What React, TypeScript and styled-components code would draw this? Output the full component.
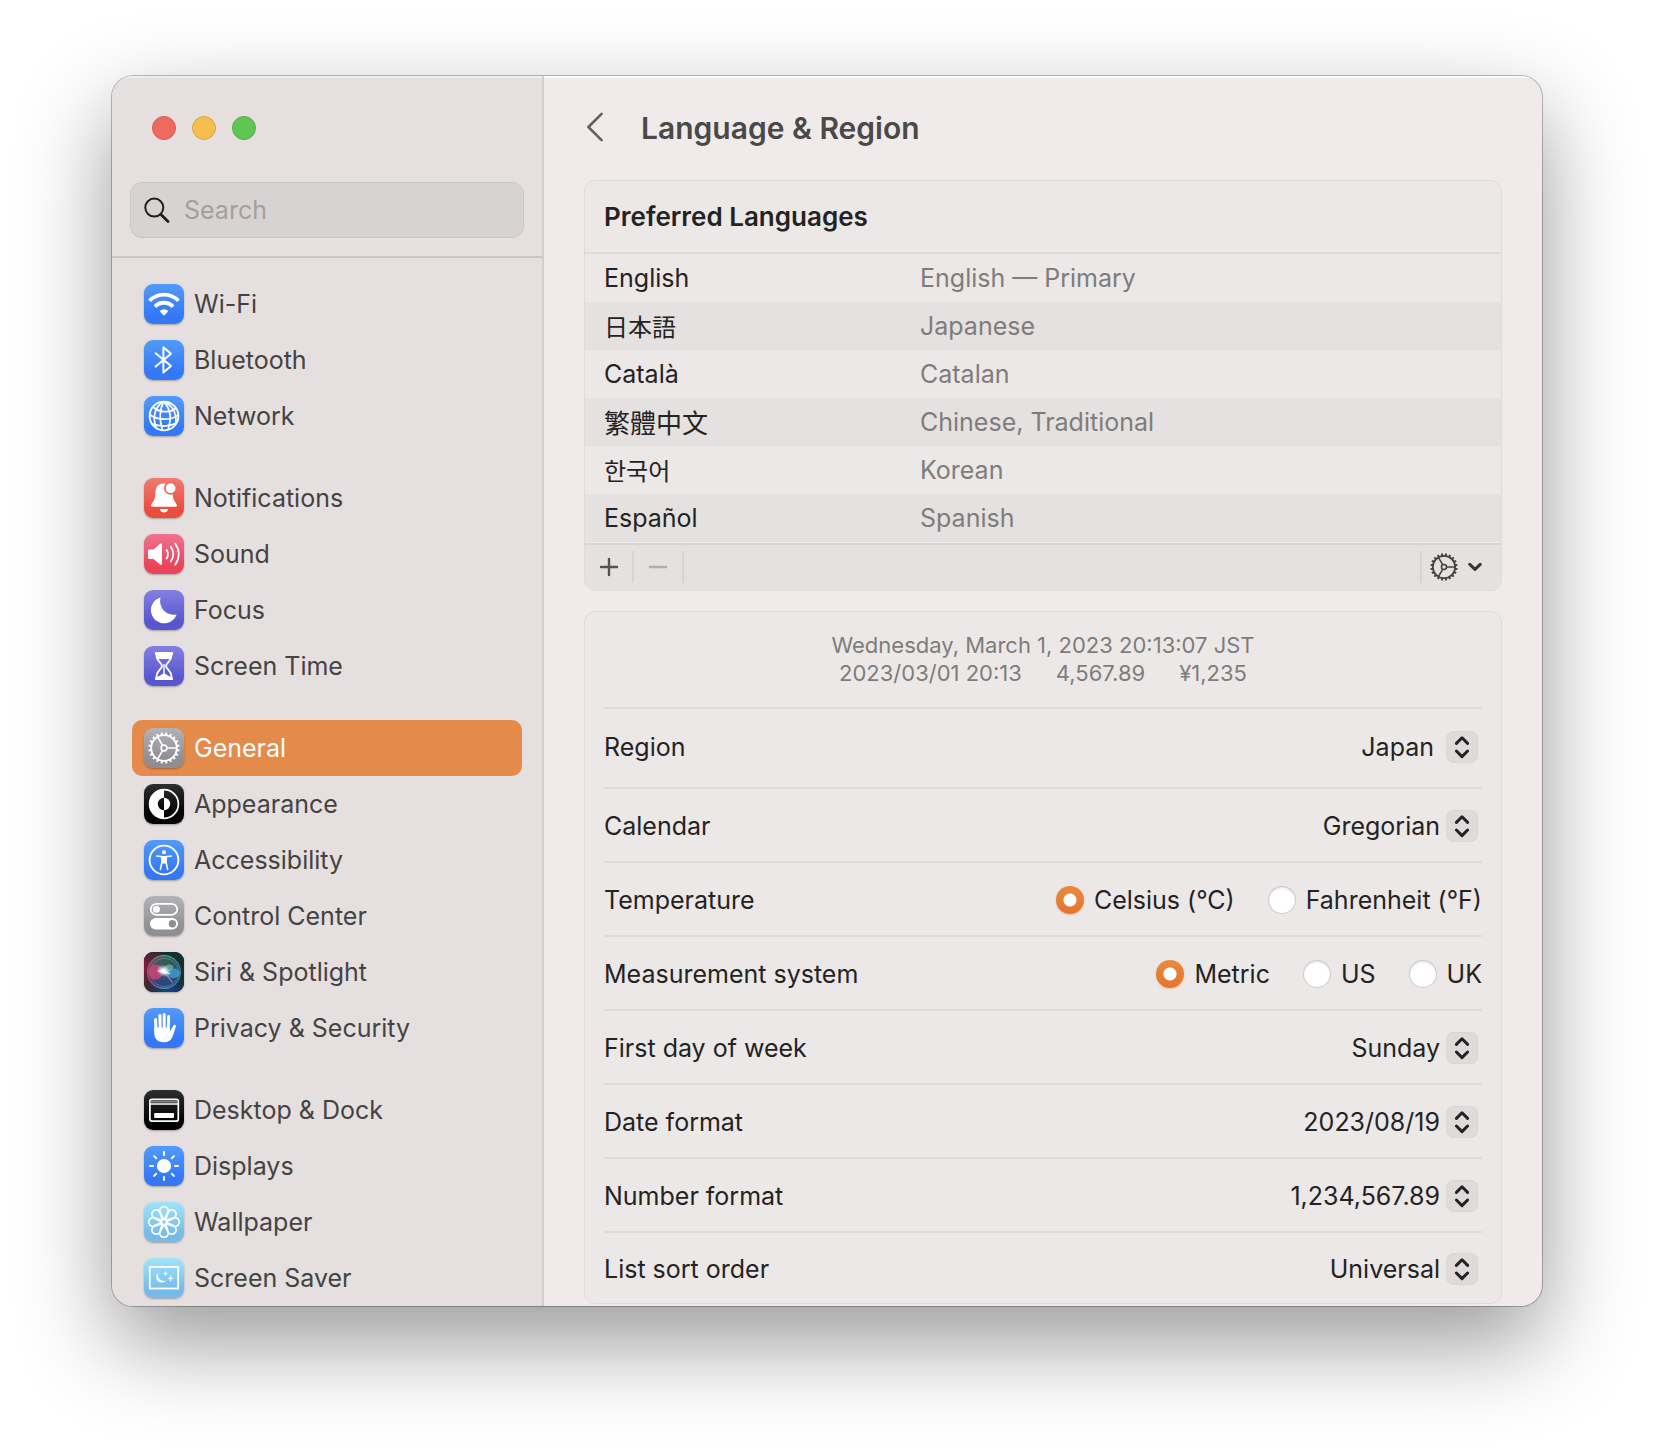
import React, { useState } from "react";
import styled, { createGlobalStyle, css } from "styled-components";

const GlobalStyle = createGlobalStyle`
  *, *::before, *::after { box-sizing: border-box; }
  body {
    margin: 0;
    background: #ffffff;
    font-family: Inter, "Noto Sans CJK JP", sans-serif;
    font-size: 25px;
    line-height: 32px;
    color: #242323;
  }
  button, input, select { font: inherit; color: inherit; }
`;

/* ---------- window ---------- */

const Desktop = styled.div`
  padding: 76px 112px 148px;
`;

const Window = styled.div`
  display: flex;
  border-radius: 21px;
  overflow: hidden;
  background: #f0ebea;
  box-shadow:
    0 0 0 1px rgba(0, 0, 0, 0.25),
    0 36px 92px rgba(0, 0, 0, 0.41);
`;

const Sidebar = styled.aside`
  flex: 0 0 432px;
  min-width: 0;
  background: #e5dfdf;
  border-right: 2px solid #d3cdcc;
  box-shadow: inset 0 2px 0 #f0ecec;
`;

const SidebarTop = styled.div`
  padding: 40px 18px 18px;
  border-bottom: 2px solid #cbc5c5;
`;

const TrafficLights = styled.div`
  display: flex;
  gap: 16px;
  padding-left: 22px;
  margin-bottom: 42px;
`;

const Light = styled.button<{ $fill: string; $edge: string }>`
  width: 24px;
  height: 24px;
  padding: 0;
  border-radius: 50%;
  border: 1px solid ${(p) => p.$edge};
  background: ${(p) => p.$fill};
`;

const SearchBox = styled.label`
  display: flex;
  align-items: center;
  gap: 14px;
  height: 56px;
  padding: 0 13px;
  border: 1px solid #cac6c5;
  border-radius: 12px;
  background: #d7d3d2;
  svg { flex: none; }
`;

const SearchInput = styled.input`
  flex: 1;
  width: 100%;
  min-width: 0;
  padding: 0;
  border: 0;
  outline: 0;
  background: transparent;
  &::placeholder {
    color: #a39f9e;
    opacity: 1;
  }
`;

const Nav = styled.nav`
  display: flex;
  flex-direction: column;
  gap: 26px;
  padding: 18px 20px 0;
`;

const NavGroup = styled.div`
  display: flex;
  flex-direction: column;
`;

const NavLink = styled.a<{ $active: boolean }>`
  display: flex;
  align-items: center;
  gap: 10px;
  height: 56px;
  padding: 0 12px;
  border-radius: 10px;
  text-decoration: none;
  color: ${(p) => (p.$active ? "#ffffff" : "#454342")};
  background: ${(p) => (p.$active ? "#e48a4a" : "transparent")};
`;

const Tile = styled.span<{ $from: string; $to: string }>`
  flex: none;
  display: block;
  width: 40px;
  height: 40px;
  border-radius: 9px;
  overflow: hidden;
  background: linear-gradient(${(p) => p.$from}, ${(p) => p.$to} 80%);
  box-shadow: 0 1px 2px rgba(0, 0, 0, 0.3);
  svg { display: block; }
`;

/* ---------- main pane ---------- */

const Main = styled.main`
  flex: 1;
  min-width: 0;
  padding: 0 40px 2px;
  box-shadow: inset 0 2px 0 #faf8f8;
`;

const TitleBar = styled.header`
  display: flex;
  align-items: center;
  gap: 37px;
  height: 104px;
`;

const BackButton = styled.button`
  display: flex;
  padding: 0;
  border: 0;
  background: transparent;
  color: #636060;
`;

const Title = styled.h1`
  margin: 0;
  font-size: 30px;
  line-height: 36px;
  font-weight: 600;
  color: #4a4848;
`;

const Card = styled.section`
  border: 1px solid #dfdbda;
  border-radius: 11px;
  overflow: hidden;
  background: #ece8e7;
  & + & { margin-top: 20px; }
`;

const CardTitle = styled.h2`
  display: flex;
  align-items: center;
  margin: 0;
  height: 73px;
  padding: 0 19px;
  border-bottom: 2px solid #dfdbda;
  font-size: 26px;
  font-weight: 600;
`;

const LanguageTable = styled.table`
  width: 100%;
  table-layout: fixed;
  border-collapse: collapse;
`;

const LanguageRow = styled.tr`
  height: 48px;
  &:nth-child(even) { background: #e5e1e0; }
`;

const LanguageName = styled.th<{ $font?: string; $size?: number }>`
  width: 335px;
  padding: 0 0 0 19px;
  text-align: left;
  font-weight: 400;
  ${(p) => p.$font && css`font-family: ${p.$font};`}
  ${(p) => p.$size && css`font-size: ${p.$size}px;`}
`;

const LanguageDetail = styled.td`
  padding: 0;
  color: #7f7c7b;
`;

const CardFooter = styled.div`
  display: flex;
  align-items: center;
  height: 48px;
  border-top: 1px solid #efebea;
  box-shadow: inset 0 2px 0 #d8d4d3;
  background: #e5e1e0;
`;

const ToolButton = styled.button<{ $edge: "left" | "right"; $width: number }>`
  display: flex;
  align-items: center;
  justify-content: center;
  width: ${(p) => p.$width}px;
  height: 32px;
  padding: 0;
  border: 0 solid #d8d4d3;
  border-${(p) => p.$edge}-width: 2px;
  background: transparent;
  color: #555252;
  &:disabled { color: #b2aead; }
`;

const MenuButton = styled(ToolButton)`
  justify-content: flex-start;
  gap: 10px;
  padding-left: 8px;
`;

const Spacer = styled.span`
  flex: 1;
`;

const Preview = styled.div`
  padding: 19px 0 20px;
  text-align: center;
  font-size: 22px;
  line-height: 28px;
  color: #7f7c7b;
`;

const PreviewLine = styled.div`
  display: flex;
  justify-content: center;
  gap: 34px;
`;

const Settings = styled.div`
  padding: 0 19px;
`;

const Row = styled.div<{ $tall?: boolean }>`
  display: flex;
  align-items: center;
  justify-content: space-between;
  height: ${(p) => (p.$tall ? 80 : 74)}px;
  padding: ${(p) => (p.$tall ? "0 0 2px" : "2px 0 0")};
  border-top: 2px solid #dfdbda;
  &:last-child { height: 72px; }
`;

const Picker = styled.span`
  display: grid;
  align-items: center;
  padding-right: 4px;
  & > * { grid-area: 1 / 1; }
`;

const Select = styled.select<{ $gap: number }>`
  appearance: none;
  width: 320px;
  height: 40px;
  padding: 0 ${(p) => p.$gap + 32}px 0 0;
  border: 0;
  background: transparent;
  text-align: right;
  text-align-last: right;
`;

const Stepper = styled.span`
  justify-self: end;
  width: 32px;
  height: 32px;
  border-radius: 8px;
  background: #dfdbda;
  box-shadow: inset 0 0 0 1px #dad6d5;
  pointer-events: none;
  svg { display: block; }
`;

const RadioSet = styled.fieldset`
  display: flex;
  gap: 33px;
  margin: 0;
  padding: 0;
  border: 0;
`;

const RadioLabel = styled.label`
  display: flex;
  align-items: center;
  gap: 10px;
`;

const Radio = styled.input`
  appearance: none;
  width: 28px;
  height: 28px;
  margin: 0;
  border-radius: 50%;
  background: #ffffff;
  box-shadow: inset 0 0 0 1px #cfcbca, inset 0 2px 3px rgba(0, 0, 0, 0.12);
  &:checked {
    background: radial-gradient(circle, #ffffff 0 6px, transparent 7px),
      linear-gradient(#e98b41, #e4732c);
    box-shadow: 0 1px 2px rgba(228, 115, 44, 0.35);
  }
`;

/* ---------- drawings ---------- */

const turn = (n: number, i: number) => `rotate(${(360 / n) * i} 20 20)`;

function GearShape({ width }: { width: number }) {
  return (
    <g fill="none" stroke="currentColor" strokeWidth={width}>
      <circle cx="20" cy="20" r="12.8" strokeWidth={width * 1.15} />
      <circle cx="20" cy="20" r="2.9" />
      {[0, 1, 2].map((i) => (
        <path key={i} d="M23 20H32.5" transform={turn(3, i)} />
      ))}
      {Array.from({ length: 20 }, (_, i) => (
        <path key={i} d="M32.8 20H35.6" transform={turn(20, i + 0.5)} strokeWidth={width * 1.25} />
      ))}
    </g>
  );
}

const glyphs: Record<string, React.ReactNode> = {
  wifi: (
    <g fill="none" stroke="#fff" strokeWidth="3.8">
      <path d="M5.6 16.8A20 20 0 0 1 34.4 16.8" />
      <path d="M11 22.6A12.5 12.5 0 0 1 29 22.6" />
      <path d="M15.6 27A6.2 6.2 0 0 1 24.4 27L20.8 31Q20 31.8 19.2 31Z" fill="#fff" stroke="none" />
    </g>
  ),
  bluetooth: (
    <path d="M11.6 13.3L27 26L19.4 32.6V7.2L27 13.8L11.6 26.6" fill="none" stroke="#fff" strokeWidth="2" strokeLinejoin="round" strokeLinecap="round" />
  ),
  network: (
    <g fill="none" stroke="#fff" strokeWidth="1.7">
      <circle cx="20" cy="20" r="14.4" strokeWidth="1.9" />
      <path d="M19.5 5.6C10.5 11 8 22 12.5 32" />
      <path d="M19.5 5.6C15.5 14 15.5 25 18.5 34.2" />
      <path d="M19.5 5.6C26 12 28 22 24 33.6" />
      <path d="M19.5 5.6C28 8.5 33 17 31.8 27.5" />
      <path d="M9 11C15 16.5 26 17.5 32 12" />
      <path d="M5.6 18.5C13 24.5 28 25 34.4 18.5" />
      <path d="M7.6 27.5C15.5 30.5 25 31 32.4 27" />
    </g>
  ),
  bell: (
    <>
      <path d="M7 27.4C7 25.4 11.4 23 11.4 15.5C11.4 9 14 5.4 19.5 5.4C25.5 5.4 28.6 9 28.6 15.5C28.6 23 33 25.4 33 27.4Q33 28.8 31.5 28.8H8.5Q7 28.8 7 27.4Z" fill="#fff" />
      <path d="M15.8 31H24.2C23.8 33.4 22 34.6 20 34.6S16.2 33.4 15.8 31Z" fill="#fff" />
      <circle cx="26.6" cy="10.2" r="6.6" fill="#ee6a5c" />
      <circle cx="26.6" cy="10.2" r="4.9" fill="#fff" />
    </>
  ),
  sound: (
    <>
      <path d="M5.4 15.4H9.6L16 9.8Q18 8.6 18 11V29.4Q18 32 16 30.6L9.6 25H5.4Q4 25 4 23.6V16.8Q4 15.4 5.4 15.4Z" fill="#fff" />
      <g fill="none" stroke="#fff" strokeWidth="1.8" strokeLinecap="round">
        <path d="M22.6 16Q25.4 20.2 22.6 24.4" />
        <path d="M26.8 12.8Q31.8 20.2 26.8 27.6" />
        <path d="M31.2 9.6Q38.4 20.2 31.2 30.8" />
      </g>
    </>
  ),
  moon: <path d="M16.6 7.4A13.2 13.2 0 1 0 32.6 24.4A13.6 13.6 0 0 1 16.6 7.4Z" fill="#fff" />,
  hourglass: (
    <>
      <g fill="none" stroke="#fff" strokeWidth="1.8" strokeLinejoin="round">
        <path d="M12.6 7V10C12.6 15 18 17 18 20S12.6 25 12.6 30V33H27.4V30C27.4 25 22 23 22 20S27.4 15 27.4 10V7Z" />
      </g>
      <path d="M11.6 6H28.4Q29 6 29 7V8.4Q29 9 28 9L27 13H13L12 9Q11 9 11 8.4V7Q11 6 11.6 6Z" fill="#fff" />
      <path d="M11.6 34H28.4Q29 34 29 33V31.8Q25 30.6 20 27Q15 30.6 11 31.8V33Q11 34 11.6 34Z" fill="#fff" />
      <path d="M20 18V28" stroke="#fff" strokeWidth="1.4" />
    </>
  ),
  gear: (
    <g color="#fff">
      <GearShape width={1.6} />
    </g>
  ),
  appearance: (
    <>
      <circle cx="20" cy="20" r="14.4" fill="none" stroke="#fff" strokeWidth="1.7" />
      <path d="M20 5.4A14.6 14.6 0 0 0 20 34.6V26.2A6.2 6.2 0 0 1 20 13.8Z" fill="#fff" />
      <path d="M20 13.8A6.2 6.2 0 0 1 20 26.2Z" fill="#fff" />
    </>
  ),
  accessibility: (
    <>
      <circle cx="20" cy="20" r="14.4" fill="none" stroke="#fff" strokeWidth="1.9" />
      <circle cx="20" cy="12.2" r="2" fill="#fff" />
      <path d="M12.8 16L18 16.8V22L16.4 29.4M27.2 16L22 16.8V22L23.6 29.4" fill="none" stroke="#fff" strokeWidth="1.6" strokeLinecap="round" />
      <path d="M16.5 15.9H23.5L22.8 18V23.5H17.2V18Z" fill="#fff" />
    </>
  ),
  toggles: (
    <>
      <rect x="6.8" y="7.8" width="26.4" height="11" rx="5.5" fill="none" stroke="#fff" strokeWidth="1.7" />
      <circle cx="12.4" cy="13.3" r="3.5" fill="#fff" />
      <rect x="6" y="22" width="28" height="11.4" rx="5.7" fill="#fff" />
      <circle cx="28.4" cy="27.7" r="3.7" fill="#8f8e93" />
    </>
  ),
  siri: (
    <>
      <defs>
        <radialGradient id="siriRed" cx="0" cy="0.4" r="0.7">
          <stop offset="0" stopColor="#8a1a3c" />
          <stop offset="1" stopColor="#8a1a3c" stopOpacity="0" />
        </radialGradient>
        <radialGradient id="siriBlue" cx="0.6" cy="1.05" r="0.55">
          <stop offset="0" stopColor="#1f3f96" />
          <stop offset="1" stopColor="#1f3f96" stopOpacity="0" />
        </radialGradient>
        <radialGradient id="siriGlow">
          <stop offset="0" stopColor="#ffffff" />
          <stop offset="0.3" stopColor="#ffffff" stopOpacity="0.85" />
          <stop offset="1" stopColor="#b9eef0" stopOpacity="0" />
        </radialGradient>
        <linearGradient id="siriRing" x1="0" x2="1">
          <stop offset="0" stopColor="#d9527e" />
          <stop offset="0.5" stopColor="#67b79a" />
          <stop offset="1" stopColor="#3f93c4" />
        </linearGradient>
        <linearGradient id="siriOrb" x1="0" x2="0" y1="0" y2="1">
          <stop offset="0" stopColor="#3f7f6b" />
          <stop offset="0.5" stopColor="#3f6f86" />
          <stop offset="1" stopColor="#24439c" />
        </linearGradient>
      </defs>
      <rect width="40" height="40" fill="#14302f" />
      <rect width="40" height="40" fill="url(#siriRed)" />
      <rect width="40" height="40" fill="url(#siriBlue)" />
      <circle cx="20" cy="20" r="16.4" fill="url(#siriOrb)" fillOpacity="0.6" stroke="url(#siriRing)" strokeOpacity="0.8" strokeWidth="1.1" />
      <circle cx="20.4" cy="20.4" r="14.2" fill="none" stroke="url(#siriRing)" strokeOpacity="0.7" strokeWidth="0.8" />
      <ellipse cx="11.6" cy="20" rx="7.2" ry="7.4" fill="#dc4279" fillOpacity="0.75" />
      <ellipse cx="29.4" cy="21.4" rx="6.6" ry="4.8" fill="#3fa2e0" fillOpacity="0.75" />
      <path d="M18 20C20 12 26 11 29 14C31 17 26 19 20 21Z" fill="#8fd0bb" fillOpacity="0.55" />
      <path d="M20 20L28.5 30.5" stroke="#e58ab4" strokeOpacity="0.65" strokeWidth="1.2" />
      <ellipse cx="19.6" cy="18.8" rx="7.4" ry="6" fill="url(#siriGlow)" transform="rotate(25 19.6 18.8)" />
      <path d="M13 19L20 17.4L27 22L19.4 21.4Z" fill="#ffffff" fillOpacity="0.75" />
    </>
  ),
  hand: (
    <>
      <g fill="none" stroke="#fff" strokeWidth="3" strokeLinecap="round">
        <path d="M11.6 11.6L12 23" />
        <path d="M15.9 7.4L16.2 21" />
        <path d="M20.2 6.4V21" />
        <path d="M24.6 8.6L24.2 22" />
      </g>
      <path d="M10.2 19.5H25.8V23.4C27.4 21.6 28.2 18.6 29.6 17.2C30.8 16.1 32.4 17 31.9 18.6L29 27.4C27.4 32 24.4 34.2 19.6 34.2C13.4 34.2 10.2 30.6 10.2 24.6Z" fill="#fff" />
    </>
  ),
  dock: (
    <>
      <rect x="5.9" y="9.3" width="28.4" height="21.8" rx="2" fill="none" stroke="#fff" strokeWidth="1.7" />
      <path d="M6 11.8H34" stroke="#8d8d8d" strokeWidth="1.4" />
      <path d="M6 14H34" stroke="#fff" strokeWidth="1.3" />
      <rect x="10.2" y="23" width="19.8" height="5" rx="0.8" fill="#fff" />
    </>
  ),
  sun: (
    <>
      <circle cx="20" cy="20" r="7.1" fill="#fff" />
      {Array.from({ length: 8 }, (_, i) => (
        <path key={i} d="M31 20H34" stroke="#fff" strokeWidth="2" strokeLinecap="round" transform={turn(8, i)} />
      ))}
    </>
  ),
  flower: (
    <g fill="none" stroke="#fff" strokeWidth="1.6">
      {Array.from({ length: 8 }, (_, i) => (
        <path key={i} d="M18.4 18.2L15.8 10.4C14.2 2.8 25.8 2.8 24.2 10.4L21.6 18.2" transform={turn(8, i)} />
      ))}
      <circle cx="20" cy="20" r="2.6" />
    </g>
  ),
  saver: (
    <>
      <rect x="5.8" y="8.9" width="28.4" height="21.6" fill="none" stroke="#fff" strokeWidth="1.8" />
      <path d="M14.4 14.6A5.5 5.5 0 1 0 22 22.4A5.9 5.9 0 0 1 14.4 14.6Z" fill="#fff" />
      <path d="M21.5 12.6L22.2 14.9L24.4 15.6L22.2 16.3L21.5 18.6L20.8 16.3L18.8 15.6L20.8 14.9Z" fill="#fff" />
      <path d="M26.6 16.6L27.4 19.4L30 20.3L27.4 21.2L26.6 24L25.8 21.2L23.4 20.3L25.8 19.4Z" fill="#fff" />
    </>
  ),
};

const tints = {
  blue: ["#529af8", "#3478f6"],
  red: ["#ee7b70", "#eb4d3d"],
  pink: ["#ee7390", "#eb445a"],
  violet: ["#8380e2", "#5856ce"],
  gray: ["#b3b2b6", "#8f8e93"],
  black: ["#2e2e2e", "#000000"],
  sky: ["#a2e3fa", "#74bbe9"],
} as const;

type Tint = keyof typeof tints;
type NavItem = [label: string, glyph: string, tint: Tint];

const groups: NavItem[][] = [
  [
    ["Wi-Fi", "wifi", "blue"],
    ["Bluetooth", "bluetooth", "blue"],
    ["Network", "network", "blue"],
  ],
  [
    ["Notifications", "bell", "red"],
    ["Sound", "sound", "pink"],
    ["Focus", "moon", "violet"],
    ["Screen Time", "hourglass", "violet"],
  ],
  [
    ["General", "gear", "gray"],
    ["Appearance", "appearance", "black"],
    ["Accessibility", "accessibility", "blue"],
    ["Control Center", "toggles", "gray"],
    ["Siri & Spotlight", "siri", "black"],
    ["Privacy & Security", "hand", "blue"],
  ],
  [
    ["Desktop & Dock", "dock", "black"],
    ["Displays", "sun", "blue"],
    ["Wallpaper", "flower", "sky"],
    ["Screen Saver", "saver", "sky"],
  ],
];

const languages = [
  { name: "English", detail: "English — Primary", lang: "en" },
  { name: "日本語", detail: "Japanese", lang: "ja", font: '"Noto Sans CJK JP", sans-serif', size: 24 },
  { name: "Català", detail: "Catalan", lang: "ca" },
  { name: "繁體中文", detail: "Chinese, Traditional", lang: "zh-Hant", font: '"Noto Sans CJK TC", sans-serif', size: 26 },
  { name: "한국어", detail: "Korean", lang: "ko", font: '"Noto Sans CJK KR", sans-serif', size: 24 },
  { name: "Español", detail: "Spanish", lang: "es" },
];

/* ---------- rows ---------- */

function SelectRow({ label, value, tall }: { label: string; value: string; tall?: boolean }) {
  const id = label.toLowerCase().replace(/ /g, "-");
  return (
    <Row $tall={tall}>
      <label htmlFor={id}>{label}</label>
      <Picker>
        <Select id={id} $gap={tall ? 12 : 6} defaultValue={value}>
          <option>{value}</option>
        </Select>
        <Stepper>
          <svg width="32" height="32" viewBox="0 0 32 32" fill="none" stroke="#242323" strokeWidth="3" strokeLinecap="round" strokeLinejoin="round" aria-hidden="true">
            <path d="M10.4 12.4L16 6.8L21.6 12.4M10.4 20L16 25.6L21.6 20" />
          </svg>
        </Stepper>
      </Picker>
    </Row>
  );
}

function RadioRow({ label, options }: { label: string; options: string[] }) {
  const [chosen, setChosen] = useState(options[0]);
  return (
    <Row>
      <span>{label}</span>
      <RadioSet aria-label={label}>
        {options.map((option) => (
          <RadioLabel key={option}>
            <Radio type="radio" name={label} checked={chosen === option} onChange={() => setChosen(option)} />
            {option}
          </RadioLabel>
        ))}
      </RadioSet>
    </Row>
  );
}

export default function App() {
  return (
    <>
      <GlobalStyle />
      <Desktop>
        <Window>
          <Sidebar>
            <SidebarTop>
              <TrafficLights>
                <Light aria-label="Close" $fill="#ed6a5e" $edge="#d9584d" />
                <Light aria-label="Minimize" $fill="#f5bf4f" $edge="#d9a441" />
                <Light aria-label="Zoom" $fill="#61c554" $edge="#51ab44" />
              </TrafficLights>
              <SearchBox>
                <svg width="26" height="26" viewBox="0 0 26 26" fill="none" stroke="#1f1e1e" strokeLinecap="round" aria-hidden="true">
                  <circle cx="10.3" cy="10.6" r="9" strokeWidth="2" />
                  <path d="M17 17.4L24 24.4" strokeWidth="2.8" />
                </svg>
                <SearchInput type="text" placeholder="Search" aria-label="Search" />
              </SearchBox>
            </SidebarTop>
            <Nav>
              {groups.map((group) => (
                <NavGroup key={group[0][0]}>
                  {group.map(([label, glyph, tint]) => (
                    <NavLink key={label} href="#" $active={label === "General"}>
                      <Tile $from={tints[tint][0]} $to={tints[tint][1]}>
                        <svg width="40" height="40" viewBox="0 0 40 40" aria-hidden="true">
                          {glyphs[glyph]}
                        </svg>
                      </Tile>
                      {label}
                    </NavLink>
                  ))}
                </NavGroup>
              ))}
            </Nav>
          </Sidebar>

          <Main>
            <TitleBar>
              <BackButton aria-label="Back">
                <svg width="20" height="32" viewBox="0 0 20 32" fill="none" stroke="currentColor" strokeWidth="2.6" strokeLinecap="round" strokeLinejoin="round">
                  <path d="M17.6 1.8L4.4 15L17.6 28.2" />
                </svg>
              </BackButton>
              <Title>Language &amp; Region</Title>
            </TitleBar>

            <Card>
              <CardTitle>Preferred Languages</CardTitle>
              <LanguageTable>
                <tbody>
                  {languages.map((l) => (
                    <LanguageRow key={l.lang}>
                      <LanguageName scope="row" lang={l.lang} $font={l.font} $size={l.size}>
                        {l.name}
                      </LanguageName>
                      <LanguageDetail>{l.detail}</LanguageDetail>
                    </LanguageRow>
                  ))}
                </tbody>
              </LanguageTable>
              <CardFooter>
                <ToolButton aria-label="Add language" $edge="right" $width={49}>
                  <svg width="20" height="20" viewBox="0 0 20 20" stroke="currentColor" strokeWidth="2.4" strokeLinecap="round">
                    <path d="M10 2V18M2 10H18" />
                  </svg>
                </ToolButton>
                <ToolButton aria-label="Remove language" $edge="right" $width={50} disabled>
                  <svg width="20" height="20" viewBox="0 0 20 20" stroke="currentColor" strokeWidth="2.4" strokeLinecap="round">
                    <path d="M2 10H18" />
                  </svg>
                </ToolButton>
                <Spacer />
                <MenuButton aria-label="Language options" $edge="left" $width={81}>
                  <svg width="28" height="28" viewBox="4 4 32 32" color="#454242">
                    <GearShape width={1.8} />
                  </svg>
                  <svg width="14" height="10" viewBox="0 0 14 10" fill="none" stroke="#383535" strokeWidth="3" strokeLinecap="round" strokeLinejoin="round">
                    <path d="M1.8 2.4L7 7.4L12.2 2.4" />
                  </svg>
                </MenuButton>
              </CardFooter>
            </Card>

            <Card>
              <Preview>
                <div>Wednesday, March 1, 2023 20:13:07 JST</div>
                <PreviewLine>
                  <span>2023/03/01 20:13</span>
                  <span>4,567.89</span>
                  <span>¥1,235</span>
                </PreviewLine>
              </Preview>
              <Settings>
                <SelectRow label="Region" value="Japan" tall />
                <SelectRow label="Calendar" value="Gregorian" />
                <RadioRow label="Temperature" options={["Celsius (°C)", "Fahrenheit (°F)"]} />
                <RadioRow label="Measurement system" options={["Metric", "US", "UK"]} />
                <SelectRow label="First day of week" value="Sunday" />
                <SelectRow label="Date format" value="2023/08/19" />
                <SelectRow label="Number format" value="1,234,567.89" />
                <SelectRow label="List sort order" value="Universal" />
              </Settings>
            </Card>
          </Main>
        </Window>
      </Desktop>
    </>
  );
}
